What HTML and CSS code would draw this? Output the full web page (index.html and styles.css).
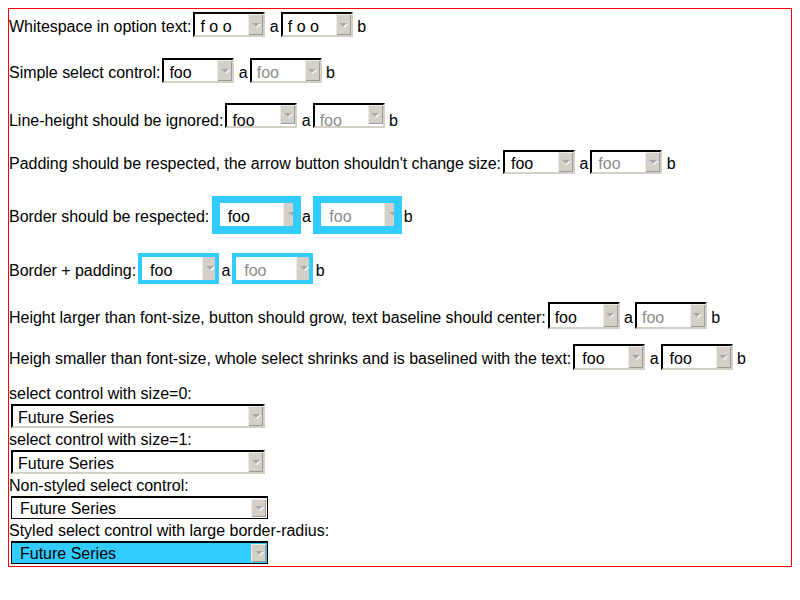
FILE: index.html
```html
<!DOCTYPE html>
<html>
<head>
<meta charset="utf-8">
<title>select tests</title>
<link rel="stylesheet" href="styles.css">
</head>
<body>
<div class="box">
  <div class="row row-ws">Whitespace in option text:<span class="sel"><span class="val">f o o</span><span class="btn"></span></span> a<span class="sel"><span class="val">f o o</span><span class="btn"></span></span> b</div>
  <div class="row row-simple">Simple select control:<span class="sel"><span class="val">foo</span><span class="btn"></span></span> a<span class="sel dis"><span class="val">foo</span><span class="btn"></span></span> b</div>
  <div class="row row-lh">Line-height should be ignored:<span class="sel sel-lh"><span class="val">foo</span><span class="btn"></span></span> a<span class="sel sel-lh dis"><span class="val">foo</span><span class="btn"></span></span> b</div>
  <div class="row row-pad">Padding should be respected, the arrow button shouldn't change size:<span class="sel sel-pad"><span class="val">foo</span><span class="btn"></span></span> a<span class="sel sel-pad dis"><span class="val">foo</span><span class="btn"></span></span> b</div>
  <div class="row row-border">Border should be respected: <span class="sel sel-border"><span class="val">foo</span><span class="btn"></span></span> a <span class="sel sel-border dis"><span class="val">foo</span><span class="btn"></span></span> b</div>
  <div class="row row-bp">Border + padding: <span class="sel sel-bp"><span class="val">foo</span><span class="btn"></span></span> a <span class="sel sel-bp dis"><span class="val">foo</span><span class="btn"></span></span> b</div>
  <div class="row row-tall">Height larger than font-size, button should grow, text baseline should center:<span class="sel sel-tall"><span class="val">foo</span><span class="btn"></span></span> a<span class="sel sel-tall dis"><span class="val">foo</span><span class="btn"></span></span> b</div>
  <div class="row row-short">Heigh smaller than font-size, whole select shrinks and is baselined with the text:<span class="sel sel-short"><span class="val">foo</span><span class="btn"></span></span> a<span class="sel sel-short"><span class="val">foo</span><span class="btn"></span></span> b</div>

  <div class="label label-first">select control with size=0:</div>
  <div class="wide"><span class="sel sel-wide"><span class="val">Future Series</span><span class="btn"></span></span></div>
  <div class="label">select control with size=1:</div>
  <div class="wide"><span class="sel sel-wide"><span class="val">Future Series</span><span class="btn"></span></span></div>
  <div class="label">Non-styled select control:</div>
  <div class="wide"><span class="sel sel-plain"><span class="val">Future Series</span><span class="btn"></span></span></div>
  <div class="label">Styled select control with large border-radius:</div>
  <div class="wide wide-last"><span class="sel sel-plain sel-styled"><span class="val">Future Series</span><span class="btn"></span></span></div>
</div>
</body>
</html>
```

FILE: styles.css
```css
body {
  margin: 8px;
  font-family: "Liberation Sans", Arial, sans-serif;
  font-size: 16px;
  line-height: 18px;
  color: #000;
  background: #fff;
}

.box {
  border: 1px solid #ff0000;
}

.row {
  white-space: nowrap;
  letter-spacing: -0.03px;
}

.row-ws { margin-top: 3px; }
.row-simple { margin-top: 21px; }
.row-lh { margin-top: 20px; }
.row-pad { margin-top: 19.5px; }
.row-border { margin-top: 22px; }
.row-bp { margin-top: 19px; }
.row-tall { margin-top: 18px; }
.row-short { margin-top: 15px; }

.label-first { margin-top: 15px; }

.wide {
  line-height: 0;
  margin: 1px 0 3px;
}
.wide-last { margin-bottom: 2px; }

/* generic select look */
.sel {
  display: inline-flex;
  vertical-align: baseline;
  box-sizing: border-box;
  width: 72px;
  height: 25px;
  margin-left: 2px;
  border: 2px solid;
  border-color: #000 #d4d0c8 #d4d0c8 #000;
  background: #fff;
  overflow: hidden;
  line-height: 21px;
  letter-spacing: 0;
}

.val {
  flex: 1;
  min-width: 0;
  padding: 2px 0 0 5px;
  white-space: pre;
  overflow: hidden;
}

.dis .val { color: #8c8c8c; }

.btn {
  flex: none;
  width: 15px;
  background: #d4d0c8;
  box-shadow: inset 1px 1px #ececec, inset -1px -1px #9a9a9a;
  display: flex;
  align-items: center;
  justify-content: center;
}

.btn::after {
  content: "";
  width: 0;
  height: 0;
  border-left: 4px solid transparent;
  border-right: 4px solid transparent;
  border-top: 4px solid #a8a8a8;
  filter: drop-shadow(1px 1px 0 #fff);
}

/* line-height ignored */
.sel-lh { align-items: flex-start; }
.sel-lh .val { padding-top: 5px; }
.sel-lh .btn { height: 19px; }

/* padding respected */
.sel-pad { height: 24px; }
.sel-pad .val { padding-left: 6px; padding-top: 1px; }

/* border respected */
.sel-border {
  width: 89px;
  height: 38px;
  margin: 0 -3px 0 -2px;
  border: 8px solid #33ccff;
  border-top-width: 7px;
}
.sel-border .val { padding-left: 8px; padding-top: 3px; }
.sel-border .btn {
  width: 10px;
  box-shadow: inset 1px 0 #ececec;
  justify-content: flex-end;
}
.sel-border .btn::after { margin-right: -3px; }

/* border + padding */
.sel-bp {
  width: 81px;
  height: 31px;
  margin: 0 -2px 0 -2.5px;
  border: 4px solid #33ccff;
}
.sel-bp .val { padding-left: 8px; padding-top: 3px; }
.sel-bp .btn {
  width: 13px;
  box-shadow: inset 1px 0 #ececec;
  justify-content: flex-end;
}
.sel-bp .btn::after { margin-right: 1px; }

/* taller */
.sel-tall { height: 27px; }
.sel-tall .val { padding-top: 3px; }

/* shorter */
.sel-short { height: 26px; }
.sel-short .val { padding-left: 7px; padding-top: 2px; }

/* wide selects */
.sel-wide {
  width: 254px;
  height: 24px;
  vertical-align: top;
}
.sel-wide .val { padding: 2px 0 0 5px; line-height: 20px; }

.sel-plain {
  width: 257px;
  height: 23px;
  margin-left: 2px;
  vertical-align: top;
  border: 1px solid #000;
  border-top-width: 2px;
}
.sel-plain .val { padding: 1px 0 0 8px; line-height: 20px; }
.sel-plain .btn { margin: 1px 1px 1px 0; }

.sel-styled { background: #33ccff; }
```
